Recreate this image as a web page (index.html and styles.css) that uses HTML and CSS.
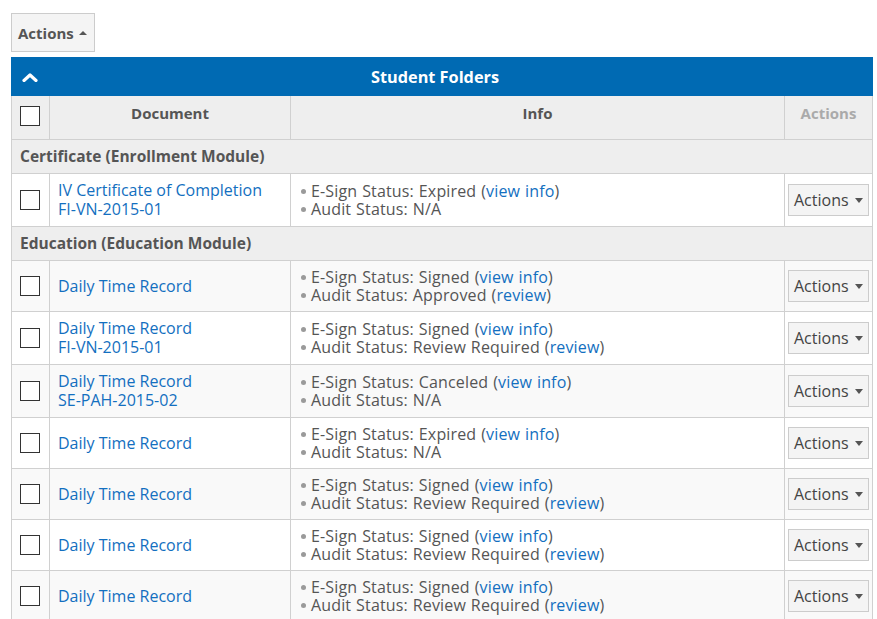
FILE: index.html
```html
<!DOCTYPE html>
<html>
<head>
<meta charset="utf-8">
<link rel="stylesheet" href="styles.css">
</head>
<body>
<div class="page">
  <button class="top-btn">Actions <span class="caret-up"></span></button>
  <table class="folders">
    <colgroup>
      <col class="c-check"><col class="c-doc"><col class="c-info"><col class="c-act">
    </colgroup>
    <thead>
      <tr class="title-row">
        <th colspan="4">
          <div class="title-bar">
            <svg class="chev" width="16" height="10" viewBox="0 0 16 10"><polyline points="2,8.5 8,3 14,8.5" fill="none" stroke="#fff" stroke-width="3.2" stroke-linecap="round" stroke-linejoin="round"/></svg>
            <span class="title">Student Folders</span>
          </div>
        </th>
      </tr>
      <tr class="head-row">
        <th class="chk"><span class="box"></span></th>
        <th>Document</th>
        <th>Info</th>
        <th class="muted">Actions</th>
      </tr>
    </thead>
    <tbody>
      <tr class="group"><td colspan="4">Certificate (Enrollment Module)</td></tr>
      <tr class="white">
        <td class="chk"><span class="box"></span></td>
        <td class="doc"><a href="#">IV Certificate of Completion<br>FI-VN-2015-01</a></td>
        <td class="info"><ul><li>E-Sign Status: Expired (<a href="#">view info</a>)</li><li>Audit Status: N/A</li></ul></td>
        <td class="act"><button class="row-btn">Actions <span class="caret-down"></span></button></td>
      </tr>
      <tr class="group"><td colspan="4">Education (Education Module)</td></tr>
      <tr class="grey">
        <td class="chk"><span class="box"></span></td>
        <td class="doc"><a href="#">Daily Time Record</a></td>
        <td class="info"><ul><li>E-Sign Status: Signed (<a href="#">view info</a>)</li><li>Audit Status: Approved (<a href="#">review</a>)</li></ul></td>
        <td class="act"><button class="row-btn">Actions <span class="caret-down"></span></button></td>
      </tr>
      <tr class="white">
        <td class="chk"><span class="box"></span></td>
        <td class="doc"><a href="#">Daily Time Record<br>FI-VN-2015-01</a></td>
        <td class="info"><ul><li>E-Sign Status: Signed (<a href="#">view info</a>)</li><li>Audit Status: Review Required (<a href="#">review</a>)</li></ul></td>
        <td class="act"><button class="row-btn">Actions <span class="caret-down"></span></button></td>
      </tr>
      <tr class="grey">
        <td class="chk"><span class="box"></span></td>
        <td class="doc"><a href="#">Daily Time Record<br>SE-PAH-2015-02</a></td>
        <td class="info"><ul><li>E-Sign Status: Canceled (<a href="#">view info</a>)</li><li>Audit Status: N/A</li></ul></td>
        <td class="act"><button class="row-btn">Actions <span class="caret-down"></span></button></td>
      </tr>
      <tr class="white">
        <td class="chk"><span class="box"></span></td>
        <td class="doc"><a href="#">Daily Time Record</a></td>
        <td class="info"><ul><li>E-Sign Status: Expired (<a href="#">view info</a>)</li><li>Audit Status: N/A</li></ul></td>
        <td class="act"><button class="row-btn">Actions <span class="caret-down"></span></button></td>
      </tr>
      <tr class="grey">
        <td class="chk"><span class="box"></span></td>
        <td class="doc"><a href="#">Daily Time Record</a></td>
        <td class="info"><ul><li>E-Sign Status: Signed (<a href="#">view info</a>)</li><li>Audit Status: Review Required (<a href="#">review</a>)</li></ul></td>
        <td class="act"><button class="row-btn">Actions <span class="caret-down"></span></button></td>
      </tr>
      <tr class="white">
        <td class="chk"><span class="box"></span></td>
        <td class="doc"><a href="#">Daily Time Record</a></td>
        <td class="info"><ul><li>E-Sign Status: Signed (<a href="#">view info</a>)</li><li>Audit Status: Review Required (<a href="#">review</a>)</li></ul></td>
        <td class="act"><button class="row-btn">Actions <span class="caret-down"></span></button></td>
      </tr>
      <tr class="grey">
        <td class="chk"><span class="box"></span></td>
        <td class="doc"><a href="#">Daily Time Record</a></td>
        <td class="info"><ul><li>E-Sign Status: Signed (<a href="#">view info</a>)</li><li>Audit Status: Review Required (<a href="#">review</a>)</li></ul></td>
        <td class="act"><button class="row-btn">Actions <span class="caret-down"></span></button></td>
      </tr>
    </tbody>
  </table>
</div>
</body>
</html>
```

FILE: styles.css
```css
* { box-sizing: border-box; }
html, body { margin: 0; padding: 0; background: #fff; }
body { font-family: "Open Sans", "Noto Sans", sans-serif; color: #555; }
.page { padding: 13px 5px 0 11px; }

.top-btn {
  display: flex; align-items: center; gap: 5px;
  height: 39px; width: 84px;
  padding: 0 0 0 6px;
  margin: 0 0 5px 0;
  font-family: inherit; font-size: 15px; font-weight: 700; color: #555;
  background: #f4f4f4; border: 1px solid #ccc; border-radius: 0;
}
.caret-up {
  width: 0; height: 0;
  border-left: 4px solid transparent; border-right: 4px solid transparent;
  border-bottom: 4px solid #555;
}
.caret-down {
  display: inline-block; width: 0; height: 0; vertical-align: middle;
  border-left: 4.5px solid transparent; border-right: 4.5px solid transparent;
  border-top: 5px solid #555; margin-left: 2px;
}

.folders {
  width: 861px; table-layout: fixed; border-collapse: collapse;
}
.c-check { width: 38px; }
.c-doc { width: 241px; }
.c-info { width: 494px; }
.c-act { width: 88px; }

.title-row th {
  background: #006ab3; height: 38px; padding: 0 40px 0 10px;
  border: 1px solid #006ab3;
}
.title-bar { display: flex; align-items: center; }
.chev { display: block; }
.title { flex: 1; text-align: center; color: #fff; font-size: 16.3px; font-weight: 700; }

.head-row th {
  background: #eee; border: 1px solid #d0d0d0;
  font-size: 15px; font-weight: 700; color: #555;
  vertical-align: top; padding: 8px 4px 0; line-height: 18px; height: 44px;
}
.head-row th.muted { color: #aaa; }
.head-row th.chk { padding: 10px 8px 0; }

.box {
  display: block; width: 20px; height: 20px;
  border: 1px solid #333; background: #fff;
}

td { border: 1px solid #d0d0d0; vertical-align: middle; }
.group td {
  background: #eee; font-size: 15.5px; font-weight: 700; color: #555;
  padding: 8px 8px; line-height: 17px;
}
tr.white td { background: #fff; }
tr.grey td { background: #f9f9f9; }
td.chk { padding: 7px 8px; }
td.doc { padding: 7px 8px; font-size: 16px; line-height: 19px; }
td.info { padding: 7px 9px; font-size: 16px; line-height: 18px; letter-spacing: 0.15px; word-spacing: 0.6px; }
td.act { padding: 7px 3px; }

a { color: #136fc0; text-decoration: none; }

ul { list-style: none; margin: 0; padding: 0; }
li { display: block; white-space: nowrap; }
li::before {
  content: ""; display: inline-block; vertical-align: middle;
  width: 5px; height: 5px; border-radius: 50%;
  background: #9a9a9a; margin: -2px 5px 0 1px;
}

.row-btn {
  display: flex; align-items: center; gap: 4px;
  width: 81px; height: 32px; padding: 0 0 0 5px;
  font-family: inherit; font-size: 16px; color: #444;
  background: #f4f4f4; border: 1px solid #ccc; border-radius: 0;
}
```
